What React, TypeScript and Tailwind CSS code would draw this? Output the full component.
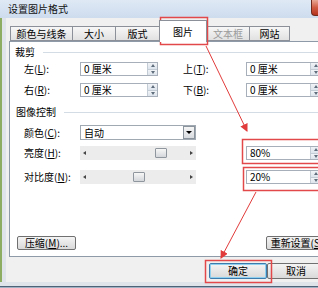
import type { ReactNode } from "react";

const Spin = () => (
  <div className="flex flex-col w-[10px] shrink-0 border-l border-[#c3cbd4]">
    <div className="flex-1 flex items-center justify-center bg-gradient-to-b from-[#f1f4f7] to-[#dde4ec] border-b border-[#c3cbd4]">
      <div className="w-0 h-0 border-l-[2.5px] border-r-[2.5px] border-b-[3px] border-l-transparent border-r-transparent border-b-[#5f6d7c]" />
    </div>
    <div className="flex-1 flex items-center justify-center bg-gradient-to-b from-[#f1f4f7] to-[#dde4ec]">
      <div className="w-0 h-0 border-l-[2.5px] border-r-[2.5px] border-t-[3px] border-l-transparent border-r-transparent border-t-[#5f6d7c]" />
    </div>
  </div>
);

const NumBox = ({ v, w }: { v: string; w: string }) => (
  <div className={`flex h-[14px] bg-white border border-[#a7b0ba] shrink-0 ${w}`}>
    <div className="flex-1 pl-[3px] text-[10px] leading-[12px] text-black">{v}</div>
    <Spin />
  </div>
);

const Label = ({ children, w }: { children: ReactNode; w: string }) => (
  <div className={`shrink-0 text-[10px] leading-[12px] text-black ${w}`}>{children}</div>
);

const Slider = ({ pos }: { pos: string }) => (
  <div className="relative flex items-center justify-between w-[116px] h-[14px] bg-[#ececec] px-[3px] shrink-0">
    <div className="w-0 h-0 border-t-[2.5px] border-b-[2.5px] border-r-[3px] border-t-transparent border-b-transparent border-r-[#444]" />
    <div className="w-0 h-0 border-t-[2.5px] border-b-[2.5px] border-l-[3px] border-t-transparent border-b-transparent border-l-[#444]" />
    <div className={`absolute top-[2px] w-[12px] h-[10px] rounded-[1px] border border-[#8f969e] bg-gradient-to-b from-[#f7f7f7] to-[#d4d7db] ${pos}`} />
  </div>
);

const Tab = ({ label, w, dim }: { label: string; w: string; dim?: boolean }) => (
  <div
    className={`h-[15px] flex items-center justify-center border border-[#8c9099] -ml-px bg-gradient-to-b from-[#f7f7f7] to-[#e1e1e1] text-[10px] leading-[12px] ${w} ${dim ? "text-[#9a9a9a]" : "text-black"}`}
  >
    {label}
  </div>
);

const Btn = ({ children, w, def }: { children: ReactNode; w: string; def?: boolean }) => (
  <div
    className={`h-[14px] flex items-center justify-center rounded-[2px] border ${def ? "border-[#3d7bad] shadow-[inset_0_0_0_1px_#8fd0f0]" : "border-[#707070]"} bg-gradient-to-b from-[#f4f4f4] to-[#d9d9d9] text-[10px] leading-[12px] text-black shrink-0 ${w}`}
  >
    {children}
  </div>
);

export default function App() {
  return (
    <div className="relative w-[318px] h-[288px] overflow-hidden flex flex-col bg-[#dce4ed] font-['Noto_Sans_CJK_SC','Noto_Sans',sans-serif]">
      {/* title bar */}
      <div className="h-[18px] shrink-0 flex items-start justify-between bg-gradient-to-b from-[#dfe9f5] to-[#cddcee]">
        <span className="pl-[8px] pt-[3px] text-[10px] leading-[11px] text-[#111]">设置图片格式</span>
        <div className="w-[7px] h-[16px] rounded-bl-[4px] border-l border-b border-[#6e2a1e] bg-gradient-to-b from-[#e7a795] via-[#d05a42] to-[#b5311e]" />
      </div>

      <div className="flex-1 flex min-h-0">
        <div className="w-[2px] bg-[#8dad62]" />
        <div className="w-[4px] bg-[#dfe4ea]" />
        {/* client */}
        <div className="flex-1 flex flex-col bg-[#f0f0f0] overflow-hidden">
          {/* tabs */}
          <div className="flex items-end h-[23px] pl-[5px] pt-[2px] shrink-0">
            <Tab label="颜色与线条" w="w-[63px]" />
            <Tab label="大小" w="w-[44px]" />
            <Tab label="版式" w="w-[45px]" />
            <div className="relative z-10 -ml-px -mb-px h-[22px] w-[48px] flex items-center justify-center bg-white border border-b-0 border-[#8c9099] text-[10px] leading-[12px] text-black">
              图片
            </div>
            <Tab label="文本框" w="w-[44px]" dim />
            <Tab label="网站" w="w-[41px]" />
          </div>

          {/* pane */}
          <div className="ml-[3px] w-[320px] h-[216px] shrink-0 flex flex-col bg-white border border-[#8e9aa8]">
            <div className="flex items-center h-[12px] mt-[4px] pl-[5px]">
              <span className="text-[10px] leading-[12px] text-black">裁剪</span>
              <div className="flex-1 h-px bg-[#d3dce4] ml-[8px]" />
            </div>

            <div className="flex items-center mt-[4px] pl-[14px]">
              <Label w="w-[56px]">左(<span className="underline">L</span>):</Label>
              <NumBox v="0 厘米" w="w-[78px]" />
              <div className="w-[25px]" />
              <Label w="w-[63px]">上(<span className="underline">T</span>):</Label>
              <NumBox v="0 厘米" w="w-[75px]" />
            </div>
            <div className="flex items-center mt-[7px] pl-[14px]">
              <Label w="w-[56px]">右(<span className="underline">R</span>):</Label>
              <NumBox v="0 厘米" w="w-[78px]" />
              <div className="w-[25px]" />
              <Label w="w-[63px]">下(<span className="underline">B</span>):</Label>
              <NumBox v="0 厘米" w="w-[75px]" />
            </div>

            <div className="flex items-center h-[12px] mt-[9px] pl-[6px]">
              <span className="text-[10px] leading-[12px] text-black">图像控制</span>
              <div className="flex-1 h-px bg-[#d3dce4] ml-[8px]" />
            </div>

            <div className="flex items-center mt-[7px] pl-[14px]">
              <Label w="w-[56px]">颜色(<span className="underline">C</span>):</Label>
              <div className="flex w-[116px] h-[15px] bg-white border border-[#a0a8b1]">
                <div className="flex-1 pl-[3px] text-[10px] leading-[13px] text-black">自动</div>
                <div className="w-[12px] flex items-center justify-center border border-[#8b939c] bg-gradient-to-b from-[#f5f5f5] to-[#d8dbdf]">
                  <div className="w-0 h-0 border-l-[3px] border-r-[3px] border-t-[3px] border-l-transparent border-r-transparent border-t-black" />
                </div>
              </div>
            </div>

            <div className="flex items-center mt-[6px] pl-[14px]">
              <Label w="w-[56px]">亮度(<span className="underline">H</span>):</Label>
              <Slider pos="left-[75px]" />
              <div className="w-[50px]" />
              <NumBox v="80%" w="w-[75px]" />
            </div>
            <div className="flex items-center mt-[10px] pl-[14px]">
              <Label w="w-[56px]">对比度(<span className="underline">N</span>):</Label>
              <Slider pos="left-[53px]" />
              <div className="w-[50px]" />
              <NumBox v="20%" w="w-[75px]" />
            </div>

            <div className="flex mt-auto mb-[6px] pl-[7px]">
              <Btn w="w-[59px]">压缩(<span className="underline">M</span>)...</Btn>
              <div className="w-[191px]" />
              <Btn w="w-[62px]">重新设置(<span className="underline">S</span>)</Btn>
            </div>
          </div>

          {/* dialog buttons */}
          <div className="flex mt-[6px] pl-[203px]">
            <Btn w="w-[58px] h-[16px]" def>确定</Btn>
            <div className="w-[8px]" />
            <Btn w="w-[58px] h-[16px]">取消</Btn>
          </div>
        </div>
      </div>

      <div className="h-[4px] shrink-0 bg-[#dfe4ea]" />
      <div className="h-px shrink-0 bg-[#4d6377]" />
      <div className="h-px shrink-0 bg-[#9fb1c3]" />

      {/* annotations */}
      <svg className="absolute inset-0 pointer-events-none" width="318" height="288" viewBox="0 0 318 288">
        <defs>
          <marker id="ah" markerWidth="8" markerHeight="8" refX="7" refY="4" orient="auto" markerUnits="userSpaceOnUse">
            <path d="M0,0 L8,4 L0,8 Z" fill="#e23b3b" />
          </marker>
        </defs>
        <g fill="none" stroke="#e2474a" strokeWidth="1.5">
          <rect x="160.5" y="17.5" width="47" height="27" />
          <rect x="242.5" y="139.5" width="80" height="24" />
          <rect x="243.5" y="167.5" width="80" height="23" />
          <rect x="205.5" y="260.5" width="66" height="22" />
        </g>
        <g stroke="#e23b3b" strokeWidth="1">
          <line x1="206" y1="46" x2="247" y2="131" markerEnd="url(#ah)" />
          <line x1="256" y1="192" x2="221" y2="258" markerEnd="url(#ah)" />
        </g>
      </svg>
    </div>
  );
}
